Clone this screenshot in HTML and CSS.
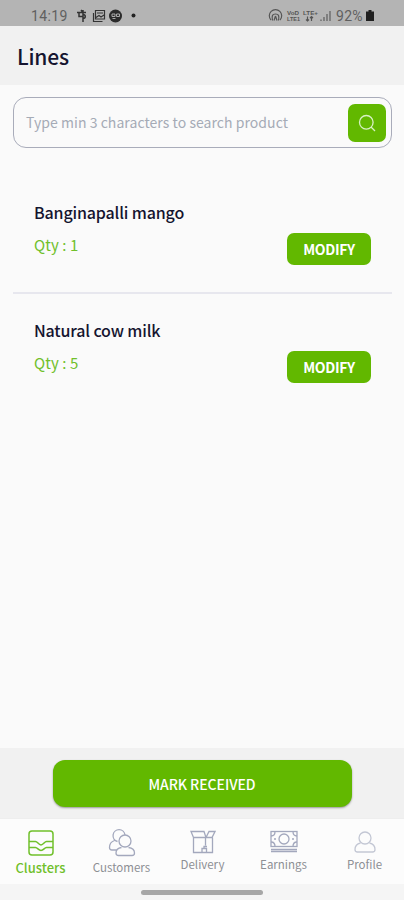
FILE: index.html
```html
<!DOCTYPE html>
<html lang="en">
<head>
<meta charset="utf-8">
<title>Lines</title>
<link rel="stylesheet" href="styles.css">
</head>
<body>
<div class="status">
  <span class="clock">14:19</span>
  <svg class="apps" width="62" height="16" viewBox="0 0 62 16" fill="none" stroke="#333">
    <path d="M1 4.500h9M3 4.500v4h4M7 2v12M5 2l2 2.500M7 6.500c3 0 3 4 0 4" stroke-width="1.500"/>
    <path d="M17.500 5v8.500h9M19.500 2.500h9v8.500h-9zM21 5h6M20 9.500l3-2 2 1.500 3-2" stroke-width="1.200"/>
    <circle cx="39.500" cy="8" r="6.500" fill="#2b2b2b" stroke="none"/>
    <path d="M36 6h3v2.500h-3zM40.500 6h3v2.500h-3zM36.500 10.500h3" stroke="#aaa"/>
    <circle cx="57.500" cy="7.500" r="2" fill="#222" stroke="none"/>
  </svg>
  <svg class="signal" width="65" height="16" viewBox="0 0 65 16" fill="none" stroke="#555">
    <path d="M3 12a6.200 6.200 0 1 1 9 0M4.500 12.500c-1-5 0-6.500 3-6.500s4 1.500 3 6.500M7.500 8l-1.500 4.500M7.500 8l1.500 4.500" stroke-width="1.200"/>
    <g class="lte"><text x="19" y="7" textLength="12" lengthAdjust="spacingAndGlyphs">VoD</text><text x="35" y="7" textLength="15" lengthAdjust="spacingAndGlyphs">LTE+</text><text x="19" y="13" textLength="13" lengthAdjust="spacingAndGlyphs">LTE1</text></g>
    <path d="M39.500 8.500v4.500M38 11.500l1.500 1.500 1.500-1.500M43.500 13V8.500M42 10l1.500-1.500 1.500 1.500" stroke-width="1.200"/>
    <path d="M53 13v-1.500M56 13V9M59 13V6M62 13V3" stroke-width="1.400" stroke="#6a6a6a"/>
  </svg>
  <span class="percent">92%</span>
  <svg width="8" height="12" viewBox="0 0 8 12"><path d="M2.500 0h3v1.500H8V11H0V1.500h2.500z" fill="#202020"/></svg>
</div>
<header><h1>Lines</h1></header>
<main>
  <div class="search">
    <span class="hint">Type min 3 characters to search product</span>
    <span class="go"><svg width="18" height="18" viewBox="0 0 18 18" fill="none" stroke="#d8f1c4" stroke-width="1.300"><circle cx="8.300" cy="8.300" r="6.800"/><path d="M13 13l4 4"/></svg></span>
  </div>
  <section class="item">
    <div><h2>Banginapalli mango</h2><p>Qty : 1</p></div>
    <button>MODIFY</button>
  </section>
  <section class="item">
    <div><h2>Natural cow milk</h2><p>Qty : 5</p></div>
    <button>MODIFY</button>
  </section>
</main>
<div class="action"><button class="mark">MARK RECEIVED</button></div>
<nav>
  <div class="tab active">
    <svg width="26" height="26" viewBox="0 0 26 26"><rect x="1" y="1" width="24" height="24" rx="3"/><path d="M1 11.500h6.500c2 0 3 3.500 5.500 3.500s3.500-3.500 5.500-3.500H25M1 17.500h6.500c2 0 3 3 5.500 3s3.500-3 5.500-3H25"/></svg>
    <span>Clusters</span>
  </div>
  <div class="tab customers">
    <svg width="28" height="28" viewBox="0 0 28 28"><circle cx="17" cy="12" r="6"/><path d="M13.500 18.500c-3.500.5-5.500 2.500-5.500 5.500 0 1.500 1 2.500 2.500 2.500H24c1.500 0 2.500-1 2.500-2.500 0-3-2-5-6-5.500M9.500 12.500a6 6 0 1 1 7.500-6.500M6.500 11.500c-3 1-5 4-5 7 0 1.500 1 2.500 2.500 2.500h4.500"/></svg>
    <span>Customers</span>
  </div>
  <div class="tab delivery">
    <svg width="26" height="24" viewBox="0 0 26 24"><path d="M3.500 7.500V22.500h19V7.500M3.500 7.500L1 1.500h13l2 6zM16 7.500l3-6h6l-3 6zM15.500 7.500v8M12 22v-3.500h4.500V22M14 18.500v-2h3"/></svg>
    <span>Delivery</span>
  </div>
  <div class="tab earnings">
    <svg width="28" height="24" viewBox="0 0 28 24"><rect x="1" y="1.500" width="26" height="15"/><circle cx="14" cy="9" r="5"/><path d="M1 6c3 0 4-1.500 4-4.500M27 6c-3 0-4-1.500-4-4.500M1 12c3 0 4 1.500 4 4.500M27 12c-3 0-4 1.500-4 4.500M4 9h2M22 9h2M1 19.500h26M1 21.500h26"/></svg>
    <span>Earnings</span>
  </div>
  <div class="tab profile">
    <svg width="22" height="22" viewBox="0 0 22 22"><circle cx="11" cy="7" r="6"/><path d="M6.500 12c-4 1-5.500 4-5.500 6.500 0 1.500 1 2.500 2.500 2.500h15c1.500 0 2.500-1 2.500-2.500 0-2.500-1.500-5.500-5.500-6.500"/></svg>
    <span>Profile</span>
  </div>
</nav>
<footer><i></i></footer>
</body>
</html>
```

FILE: styles.css
```css
* { box-sizing: border-box; margin: 0; }
body {
  width: 404px; height: 900px; overflow: hidden;
  display: flex; flex-direction: column;
  background: #fafafa; color: #15142f;
  font-family: "Noto Sans CJK SC", sans-serif;
}
svg { display: block; flex: none; }
button { border: 0; padding: 0; font-family: inherit; color: #fff; background: #62b800; white-space: nowrap; }
.status { height: 26px; background: #b4b4b4; display: flex; align-items: center; padding: 5px 29px 0 31px; font: 14px Roboto, sans-serif; color: #606060; }
.clock { width: 45px; letter-spacing: .35px; }
.signal { margin-left: 130px; }
.lte { font: bold 6px "Liberation Sans", sans-serif; fill: #555; stroke: none; }
.percent { width: 29px; margin-left: 3px; margin-right: 1px; letter-spacing: .3px; }
header { height: 59px; background: #f1f1f1; padding-left: 17px; display: flex; align-items: center; }
h1 { font-size: 21px; font-weight: 500; line-height: 28px; letter-spacing: -.2px; }
main { flex: 1; padding: 12px 12px 0 13px; }
.search { height: 51px; border: 1px solid #a9acba; border-radius: 13px; display: flex; align-items: center; justify-content: space-between; padding: 0 5px 0 12px; margin-bottom: 26px; }
.hint { font-size: 14px; color: #a5abb6; letter-spacing: .05px; margin-top: -2px; }
.go { width: 38px; height: 38px; border-radius: 7px; background: #62b800; display: grid; place-items: center; }
.item { height: 118px; padding: 25px 21px 0 21px; display: flex; justify-content: space-between; }
.item + .item { border-top: 2px solid #e7e7ee; padding-top: 23px; }
h2 { font-size: 16px; line-height: 26px; font-weight: 500; letter-spacing: -.15px; }
p { font-size: 15px; line-height: 24px; margin-top: 8px; color: #70c02b; letter-spacing: .1px; }
.item button { width: 84px; height: 32px; border-radius: 7px; font-size: 14px; font-weight: 700; letter-spacing: -.3px; margin-top: 34px; }
.action { height: 71px; background: #f1f1f1; display: flex; justify-content: center; padding: 12px 0 0; border-bottom: 1px solid #eee; }
.mark { width: 299px; height: 47px; border-radius: 12px; font-size: 14px; font-weight: 500; letter-spacing: -.05px; box-shadow: 0 1px 2px #999; }
nav { height: 65px; display: grid; grid-template-columns: repeat(5, 81px); background: #fcfcfc; }
.tab { display: flex; flex-direction: column; align-items: center; padding-top: 11px; font-size: 11.5px; line-height: 18px; color: #8d8f94; }
.tab svg { fill: none; stroke: #a3a8bd; stroke-width: 1.300; }
.tab span { margin-top: 1px; }
.tab.active { color: #70c02b; font-size: 13px; font-weight: 500; }
.active svg { stroke: #70c02b; stroke-width: 1.500; }
.active span { margin-top: 3px; }
.customers { padding-top: 10px; }
.customers svg { margin-left: 1px; }
.customers span { margin-top: 1px; }
.profile svg { stroke: #c3c7d4; }
.profile { padding-top: 12px; }
.profile span { margin-top: 2px; }
footer { height: 16px; background: #f5f5f5; display: flex; justify-content: center; padding-top: 6px; }
footer i { width: 122px; height: 5px; border-radius: 3px; background: #a7a7a7; }
```
